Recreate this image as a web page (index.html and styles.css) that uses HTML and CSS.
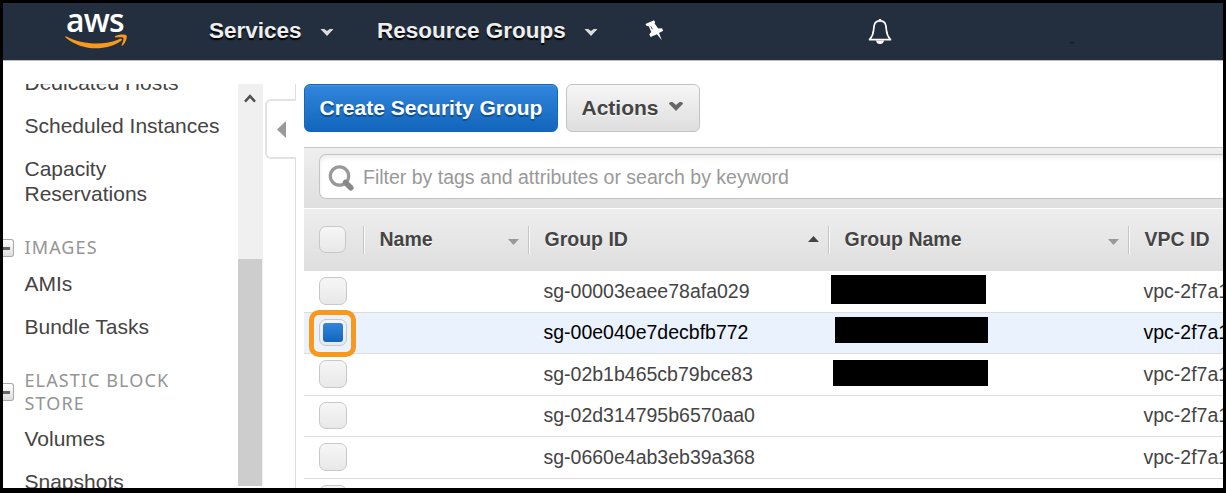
FILE: index.html
```html
<!DOCTYPE html>
<html lang="en">
<head>
<meta charset="utf-8">
<title>Security Groups</title>
<link rel="stylesheet" href="styles.css">
</head>
<body>
<div class="app">
  <header class="topbar">
    <div class="logo">
      <span class="logo-text">aws</span>
      <svg class="logo-smile" width="64" height="16" viewBox="0 0 64 16"><path d="M1 2.200C17 10.500 38 12 54 5.200C56.500 4.200 58 5.500 56 7C40 17.800 16 16.500 .5 3.400Q0 2 1 2.200Z" fill="#f8991d"/><path d="M50 2.300C53.500 .2 60.500 .2 61.500 1.500C62.500 3.300 60.500 9.500 57.300 11.700Q56.200 12.200 56.700 10.800C58 7.500 59 4.800 58.200 3.800C57.100 2.800 53.500 3.200 50.700 3.500Q49.300 3.400 50 2.300Z" fill="#f8991d"/></svg>
    </div>
    <div class="nav-item nav-services"><span>Services</span><svg width="14" height="9" viewBox="0 0 14 9"><path d="M.5 1H4.200L7 3L9.800 1H13.500L7 8Z" fill="#ddd"/></svg></div>
    <div class="nav-item nav-groups"><span>Resource Groups</span><svg width="14" height="9" viewBox="0 0 14 9"><path d="M.5 1H4.200L7 3L9.800 1H13.500L7 8Z" fill="#ddd"/></svg></div>
    <svg class="pin" width="20" height="22" viewBox="0 0 20 22"><path d="M.5 4L9 .3L10.200 2.200L9.600 3.600L13.200 8.600L17 8.300L18.200 10.800L14 13L16.800 20.300L12 14.300L5.500 17L4.300 14.300L6.300 12L3.800 6.200L1.300 5.800Z" fill="#fff"/><path d="M5.800 6.200L7.400 9.500" stroke="#232f3e" stroke-width=".8"/></svg>
    <svg class="bell" width="24" height="27" viewBox="0 0 24 27"><path d="M12 2.800C6.500 2.800 6 6.500 5.600 12C5.300 17 3.800 19 1.500 21.700H22.500C20.200 19 18.700 17 18.400 12C18 6.500 17.500 2.800 12 2.800Z" fill="none" stroke="#fff" stroke-width="1.700" stroke-linejoin="round"/><path d="M10.800 2.500V1.200Q12 .2 13.200 1.200V2.500M8 22.500H16Q15.500 26 12 26T8 22.500Z" fill="#fff"/></svg>
    <svg class="speck" width="6" height="2" viewBox="0 0 6 2"><path d="M0 1Q3-.5 6 1Q3 1.600 0 1Z" fill="#0a1016"/></svg>
  </header>
  <div class="workspace">
    <nav class="sidebar">
      <a class="link">Dedicated Hosts</a>
      <a class="link">Scheduled Instances</a>
      <a class="link">Capacity Reservations</a>
      <div class="section"><i class="minus"></i><span>IMAGES</span></div>
      <a class="link first">AMIs</a>
      <a class="link">Bundle Tasks</a>
      <div class="section"><i class="minus"></i><span>ELASTIC BLOCK STORE</span></div>
      <a class="link first tight">Volumes</a>
      <a class="link">Snapshots</a>
    </nav>
    <div class="scrollbar">
      <svg width="12" height="10" viewBox="0 0 12 10"><path d="M1 8.700L6 3.200L11 8.700" fill="none" stroke="#505050" stroke-width="2.500"/></svg>
      <div class="thumb"></div>
    </div>
    <div class="gutter">
      <div class="rail-top"></div>
      <div class="collapse"><svg width="9" height="17" viewBox="0 0 9 17"><path d="M9 0V17L0 8.500Z" fill="#999"/></svg></div>
      <div class="rail"></div>
    </div>
    <main class="content">
      <div class="toolbar">
        <button class="btn primary">Create Security Group</button>
        <button class="btn"><span>Actions</span><svg width="16" height="11" viewBox="0 0 16 11"><path d="M1 2.800Q1 1 3 1H4.500L8 4L11.500 1H13Q15 1 15 2.800L8 10Z" fill="#666"/></svg></button>
      </div>
      <div class="filterbar">
        <div class="filter">
          <svg width="27" height="27" viewBox="0 0 27 27"><circle cx="11.500" cy="11" r="9.200" fill="none" stroke="#999" stroke-width="3.200"/><path d="M17.500 17.500L22.800 22.800" stroke="#888" stroke-width="5.500" stroke-linecap="round"/></svg>
          <span>Filter by tags and attributes or search by keyword</span>
        </div>
      </div>
      <div class="row head">
        <div class="cell check"><i class="box"></i></div>
        <div class="cell"><span>Name</span><svg class="sort" width="11" height="6" viewBox="0 0 11 6"><path d="M0 0H11L5.500 6Z" fill="#999"/></svg></div>
        <div class="cell"><span>Group ID</span><svg class="sort up" width="11" height="6" viewBox="0 0 11 6"><path d="M0 6H11L5.500 0Z" fill="#444"/></svg></div>
        <div class="cell"><span>Group Name</span><svg class="sort" width="11" height="6" viewBox="0 0 11 6"><path d="M0 0H11L5.500 6Z" fill="#999"/></svg></div>
        <div class="cell"><span>VPC ID</span></div>
      </div>
      <div class="row tall">
        <div class="cell check"><i class="box"></i></div><div class="cell"></div>
        <div class="cell">sg-00003eaee78afa029</div><div class="cell"><i class="redact r1"></i></div><div class="cell">vpc-2f7a1</div>
      </div>
      <div class="row selected">
        <div class="cell check"><i class="box short on"></i><i class="highlight"></i></div><div class="cell"></div>
        <div class="cell">sg-00e040e7decbfb772</div><div class="cell"><i class="redact r2"></i></div><div class="cell">vpc-2f7a1</div>
      </div>
      <div class="row tall">
        <div class="cell check"><i class="box"></i></div><div class="cell"></div>
        <div class="cell">sg-02b1b465cb79bce83</div><div class="cell"><i class="redact r3"></i></div><div class="cell">vpc-2f7a1</div>
      </div>
      <div class="row">
        <div class="cell check"><i class="box short"></i></div><div class="cell"></div>
        <div class="cell">sg-02d314795b6570aa0</div><div class="cell"></div><div class="cell">vpc-2f7a1</div>
      </div>
      <div class="row tall">
        <div class="cell check"><i class="box"></i></div><div class="cell"></div>
        <div class="cell">sg-0660e4ab3eb39a368</div><div class="cell"></div><div class="cell">vpc-2f7a1</div>
      </div>
      <div class="row">
        <div class="cell check"><i class="box short"></i></div>
      </div>
    </main>
  </div>
</div>
</body>
</html>
```
FILE: styles.css
```css
* { box-sizing: border-box; }
body { margin: 0; background: #000; font-family: "Liberation Sans", Arial, sans-serif; color: #444; }
.app { width: 1226px; height: 493px; border: 3px solid #000; border-bottom-width: 5px; background: #fff; overflow: hidden; display: flex; flex-direction: column; }
svg { display: block; flex: none; }

.topbar { height: 58px; flex: none; background: #232f3e; border-bottom: 1px solid #bbb; display: flex; align-items: flex-start; }
.logo { width: 64px; margin-left: 62px; }
.logo-text { display: block; height: 31px; line-height: 33px; padding-left: 1px; font-family: "Open Sans", sans-serif; font-size: 32px; font-weight: 600; letter-spacing: -.8px; color: #fff; }
.nav-item { display: flex; align-items: center; height: 28px; margin-top: 14px; font-size: 22.500px; font-weight: bold; color: #eee; text-shadow: 0 2px 1px #000; white-space: nowrap; }
.nav-item svg { margin: 3px 0 0 18px; }
.nav-services { width: 168px; margin-left: 80px; }
.nav-groups { width: 268px; }
.pin { margin-top: 17px; }
.bell { margin: 15px 0 0 203px; }
.speck { margin: 39px 0 0 177px; }

.workspace { flex: 1; min-height: 0; display: flex; padding-top: 23px; }
.sidebar { width: 235px; overflow: hidden; display: flex; flex-direction: column; }
.link { flex: none; margin: 0 30px 18px 21.500px; width: 200px; font-size: 21px; line-height: 25px; }
.link:first-child { margin-top: -14px; }
.section { flex: none; display: flex; align-items: center; gap: 10.500px; margin: 12px 0 12px; font-family: "Noto Sans", sans-serif; font-size: 18px; line-height: 23px; letter-spacing: 1.100px; color: #949494; }
.section span { width: 160px; }
.section + .tight { margin-top: -1px; }
.minus { flex: none; width: 11px; height: 18px; border: 1px solid #aaa; border-left: 0; border-radius: 0 3px 3px 0; background: linear-gradient(#666, #666) 0 7px / 7px 3px no-repeat, linear-gradient(#fff, #ddd); }
.scrollbar { width: 25px; height: 402px; background: #f0f0f0; display: flex; flex-direction: column; }
.scrollbar svg { margin: 9px 0 156px 6px; }
.thumb { flex: 1; width: 24px; background: #cdcdcd; }
.gutter { width: 33px; display: flex; flex-direction: column; }
.rail-top { height: 15px; border-right: 1px solid #ddd; }
.collapse { height: 60px; margin-left: 2px; border: 2px solid #e2e2e2; border-right: 0; border-radius: 6px 0 0 6px; padding: 20px 0 0 10px; }
.rail { flex: 1; border-right: 1px solid #ddd; }

.content { flex: 1; min-width: 0; margin-left: 8px; overflow: hidden; display: flex; flex-direction: column; }
.toolbar { flex: none; display: flex; gap: 8px; height: 63px; }
.btn { height: 48px; width: 134px; padding: 0 15px 0 14.500px; border: 1px solid #c3c3c3; border-radius: 6px; background: linear-gradient(#f6f6f6, #dedede); font: bold 21px "Liberation Sans", Arial, sans-serif; color: #444; text-shadow: 0 1px 0 #fff; display: flex; align-items: center; white-space: nowrap; }
.btn svg { margin: -3px 0 0 9px; }
.primary { width: 254px; color: #fff; border-color: #1166bb; background: linear-gradient(#3286dd, #1166bb); box-shadow: inset 0 1px 1px #4c96e0; text-shadow: 0 2px 1px #0d4d92; }
.filterbar { flex: none; height: 61px; border-top: 1px solid #c8c8c8; background: linear-gradient(#eee, #dfdfdf); padding: 6px 0 0 15px; }
.filter { height: 45px; border: 1px solid #c4c4c4; border-right: 0; border-radius: 7px 0 0 7px; background: #fff; box-shadow: inset 0 3px 4px #eee; display: flex; align-items: center; padding-left: 8px; gap: 8px; font-size: 19.500px; color: #999; }
.filter svg { margin-top: 4px; }
.filter span { margin-top: 2px; }

.row { flex: none; height: 41px; width: 1000px; border-bottom: 1px solid #ddd; display: grid; grid-template-columns: 59px 165px 300px 300px 176px; font-size: 19.500px; }
.tall { height: 42px; }
.cell { display: flex; align-items: center; padding-left: 15.500px; min-width: 0; }
.row:not(.head) .cell { align-items: flex-start; line-height: 38px; }
.row.tall:not(.head) .cell { line-height: 40px; }
.row .check { padding-left: 15px; position: relative; }
.head { height: 63px; border: 0; border-top: 1px solid #fff; background: linear-gradient(#eee, #dedede); font-weight: bold; align-items: center; }
.head .cell { height: 28px; margin-top: -1px; padding-bottom: 1px; border-left: 1px solid #c4c4c4; box-shadow: inset 1px 0 0 #fafafa; text-shadow: 0 1px 0 #fff; }
.head .check { border: 0; box-shadow: none; }
.sort { margin: 5px 9px 0 auto; }
.up { margin-top: 0; }
.box { flex: none; width: 28px; height: 28px; margin-top: 6px; border: 1px solid #c8c8c8; border-radius: 7px; background: linear-gradient(#f6f6f6, #e8e8e8); }
.short { height: 27px; }
.head .box { width: 27px; height: 27px; margin: 0; }
.on { padding: 3px; }
.on::before { content: ""; display: block; width: 20px; height: 19px; border-radius: 3px; background: linear-gradient(#3286dd, #1166bb); }
.highlight { position: absolute; left: 5px; top: -3px; width: 47px; height: 47px; border: 5px solid #f8991d; border-radius: 10px; }
.selected { background: #eaf2fe; color: #000; }
.redact { height: 26px; background: #000; }
.r1 { width: 155px; height: 29px; margin: 4px 0 0 -12.500px; }
.r2 { width: 153px; margin: 4px 0 0 -8.500px; }
.r3 { width: 155px; margin: 6px 0 0 -10.500px; }
```
